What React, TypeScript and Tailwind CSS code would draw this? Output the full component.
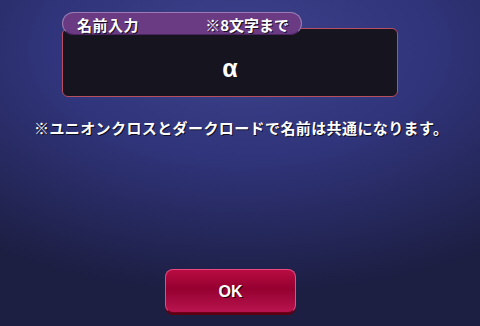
import React from "react";

const jp = "font-['Noto_Sans_CJK_JP','Noto_Sans',sans-serif]";
const shadow = "[text-shadow:1px_1px_0_rgba(0,0,0,0.75)]";

export default function App() {
  return (
    <div
      className={`h-[326px] w-[480px] overflow-hidden flex flex-col text-white ${jp} bg-[radial-gradient(ellipse_90%_75%_at_50%_15%,#3d428b_0%,#30347a_45%,#1c1e42_100%)]`}
    >
      <div className="ml-[62px] w-[336px] pt-[12px]">
        <div className="relative z-10 h-[23px] w-[240px] flex items-center justify-between pl-[14px] pr-[12px] pt-[1px] rounded-full bg-[#6a3b82] border border-[#9b7bb3] border-b-[#4a2560]">
          <span className={`text-[15px] font-bold leading-none tracking-[0.5px] ${shadow}`}>名前入力</span>
          <span className={`text-[15px] font-bold leading-none ${shadow}`}>※8文字まで</span>
        </div>
        <div className="-mt-[7px] h-[69px] rounded-[6px] border-[1.5px] border-[#b64f60] bg-[#15141f] flex items-center justify-center pt-[12px]">
          <span className="font-['Liberation_Sans',sans-serif] font-bold text-[25px] leading-none">α</span>
        </div>
      </div>

      <p className={`mt-[21px] pl-[34px] text-[15px] font-bold leading-[20px] tracking-[0.4px] whitespace-nowrap ${shadow}`}>
        ※ユニオンクロスとダークロードで名前は共通になります。
      </p>

      <div className="mt-auto mb-[13px] ml-[165px]">
        <button className="h-[44px] w-[131px] rounded-[8px] border border-[#ea4a80] border-b-[#70001a] bg-[linear-gradient(to_bottom,#b80c42_0%,#950030_45%,#b8154e_100%)] shadow-[0_2px_0_#5e0014] flex items-center justify-center pt-[2px]">
          <span className={`font-['Liberation_Sans',sans-serif] font-bold text-[16px] leading-none text-white ${shadow}`}>OK</span>
        </button>
      </div>
    </div>
  );
}
